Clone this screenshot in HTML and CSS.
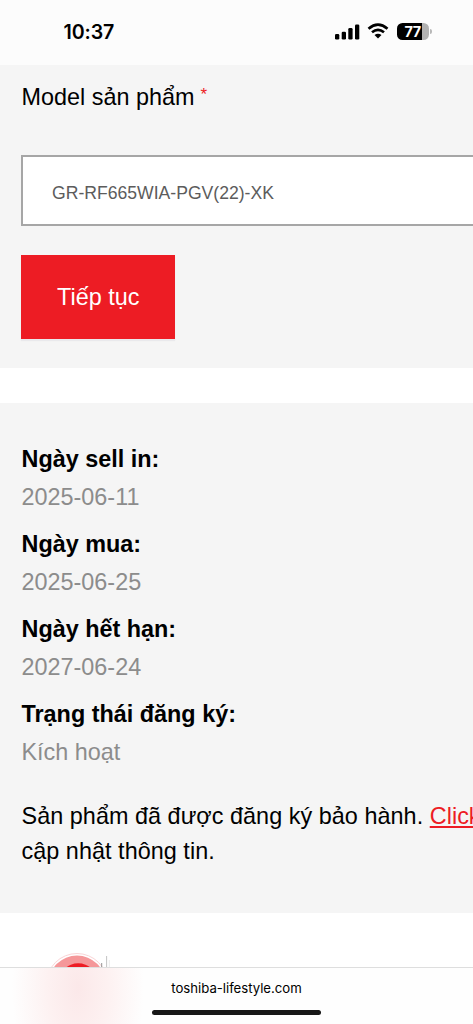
FILE: index.html
```html
<!DOCTYPE html>
<html lang="vi">
<head>
<meta charset="utf-8">
<meta name="viewport" content="width=device-width">
<title>Toshiba Lifestyle</title>
<link rel="stylesheet" href="styles.css">
</head>
<body>
<div class="screen">
  <header class="status">
    <span class="time">10:37</span>
    <div class="indicators">
      <svg class="signal" width="25" height="16" viewBox="0 0 25 16"><rect x="0" y="10" width="4.3" height="5.5" rx="1.3"/><rect x="6.7" y="7.7" width="4.3" height="7.8" rx="1.3"/><rect x="13.3" y="4" width="4.3" height="11.5" rx="1.3"/><rect x="20" y="0.5" width="4.3" height="15" rx="1.3"/></svg>
      <svg class="wifi" width="22" height="16" viewBox="0 0 22 16"><path d="M1.5 5.8Q11-2.4 20.5 5.8M5 9.3Q11 4.4 17 9.3" fill="none" stroke="#000" stroke-width="2.7"/><path d="M7.5 12Q11 9.3 14.5 12L11 15.6Z"/></svg>
      <div class="battery"><span class="cell">77</span><i class="cap"></i></div>
    </div>
  </header>
  <main>
    <section class="panel form">
      <label class="label" for="model">Model sản phẩm <sup class="required">*</sup></label>
      <input class="field" id="model" value="GR-RF665WIA-PGV(22)-XK">
      <button class="submit">Tiếp tục</button>
    </section>
    <section class="panel result">
      <dl class="details">
        <dt>Ngày sell in:</dt><dd>2025-06-11</dd>
        <dt>Ngày mua:</dt><dd>2025-06-25</dd>
        <dt>Ngày hết hạn:</dt><dd>2027-06-24</dd>
        <dt>Trạng thái đăng ký:</dt><dd>Kích hoạt</dd>
      </dl>
      <p class="message">Sản phẩm đã được đăng ký bảo hành. <a class="link" href="#">Click</a><br>cập nhật thông tin.</p>
    </section>
    <div class="support">
      <svg width="64" height="15" viewBox="0 0 64 15"><circle cx="29" cy="32" r="30.5" fill="#fff" stroke="#fad4d6"/><circle cx="29" cy="32" r="28.5" fill="#f59799"/><ellipse cx="30.2" cy="29.3" rx="19" ry="18" fill="#ed1c24"/><path d="M53.7 11v4" stroke="#777" stroke-width=".8"/><path d="M58.6 4v11" stroke="#aaa" stroke-width=".7"/><path d="M61.3 8v7" stroke="#ddd" stroke-width=".6"/></svg>
    </div>
  </main>
  <footer class="browser">
    <span class="domain">toshiba-lifestyle.com</span>
    <i class="home"></i>
  </footer>
</div>
</body>
</html>
```
FILE: styles.css
```css
* { box-sizing: border-box; }
body { margin: 0; background: #fff; }
.screen {
  width: 473px; height: 1024px; overflow: hidden;
  display: flex; flex-direction: column;
  font: 23.4px/35px "Liberation Sans", Arial, sans-serif; color: #000;
}
.status {
  height: 65px; flex: none; background: #fcfcfc;
  display: flex; justify-content: space-between; align-items: flex-start;
  padding: 20px 41.5px 0 63.5px;
}
.time { font: 600 19.6px/24px Inter, sans-serif; letter-spacing: -.1px; }
.indicators { display: flex; padding-top: 3px; }
.signal { margin: 1px 7px 0 0; }
.wifi { margin: 0 7.5px 0 0; }
.battery { display: flex; align-items: center; height: 17px; }
.cell {
  width: 32px; height: 17px; border-radius: 5.5px;
  background: linear-gradient(90deg, #000 24.7px, #b2b2b2 24.7px);
  color: #fff; font: 700 14.5px/17px Inter, sans-serif; letter-spacing: -.5px; text-align: center;
}
.cap { width: 2px; height: 5px; margin-left: 1px; background: #b8b8b8; border-radius: 0 2px 2px 0; }
main { height: 902px; flex: none; overflow: hidden; }
.panel { background: #f5f5f5; padding-left: 21.5px; overflow: hidden; }
.form { height: 303px; padding-top: 15px; display: flex; flex-direction: column; align-items: flex-start; }
.label { height: 35px; white-space: nowrap; }
.required { color: #ed1c24; font-size: 17px; line-height: 0; vertical-align: 5px; margin-left: -.5px; }
.field {
  width: 500px; height: 71px; flex: none; margin: 40px 0 29px -.5px; padding: 6px 29px 0;
  border: 2px solid #a6a6a6; border-radius: 0; background: #fff;
  color: #5c5c5c; font: 17.6px "Liberation Sans", Arial, sans-serif;
}
.submit {
  width: 153.5px; height: 84px; flex: none; margin-left: -.5px; padding: 1px 0 0 1px; border: 0;
  background: #ed1c24; color: #fff; box-shadow: 0 2px 1px #e9e9ec;
  font: 23.4px/35px "Liberation Sans", Arial, sans-serif;
}
.result { height: 510px; margin-top: 35px; padding-top: 39px; }
.details { margin: 0 0 29px; }
dt { font-weight: 700; height: 38px; }
dd { margin: 0 0 12px; height: 35px; color: #8c8c8c; }
.message { margin: 0; white-space: nowrap; letter-spacing: .04px; }
.link { color: #ed1c24; text-decoration-thickness: 1.5px; text-underline-offset: 2px; }
.support { padding: 39px 0 0 48px; height: 54px; }
.support svg { display: block; }
.browser {
  height: 57px; flex: none; border-top: 1px solid #dedede;
  display: flex; flex-direction: column; align-items: center;
  background: radial-gradient(ellipse 66px 130px at 78px 20px, #fbe8e9, #fdf1f1 45%, #fefefe 100%);
}
.domain { font: 13.2px/18px Inter, sans-serif; margin-top: 11px; letter-spacing: -.03px; }
.home { width: 169px; height: 5px; border-radius: 3px; background: #171717; margin-top: 13px; }
```
